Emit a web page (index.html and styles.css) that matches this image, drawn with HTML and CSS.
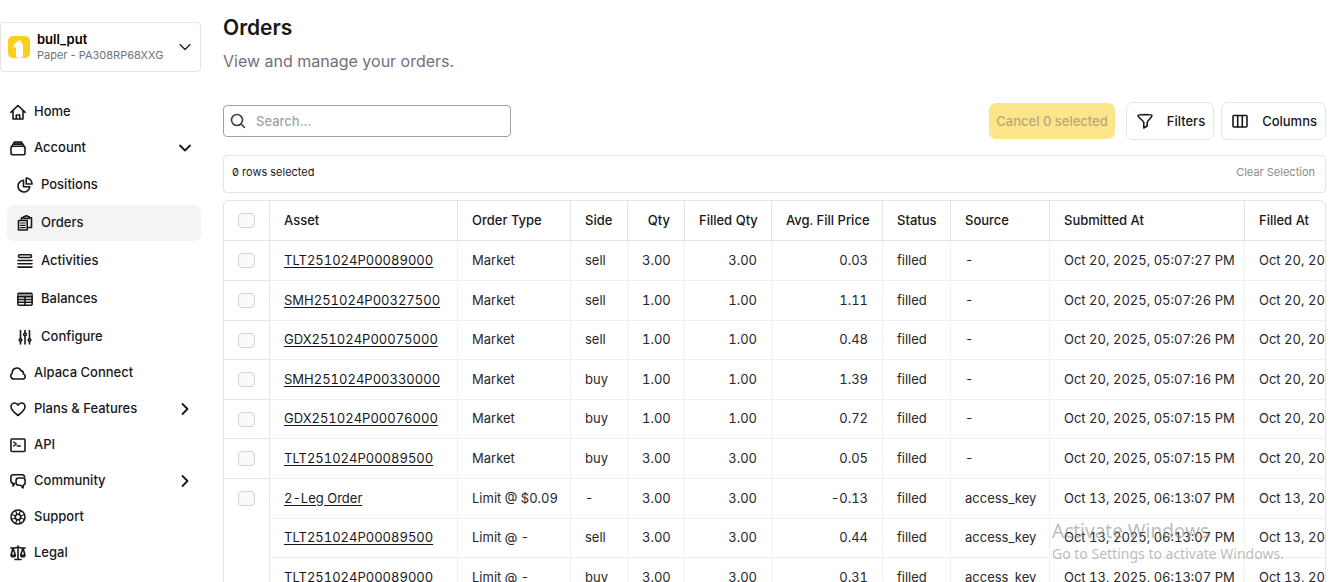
FILE: index.html
```html
<!DOCTYPE html>
<html lang="en">
<head>
<meta charset="utf-8">
<title>Orders</title>
<link rel="stylesheet" href="styles.css">
</head>
<body>
<div class="app">
  <aside class="sidebar">
    <button class="account" type="button">
      <svg class="logo" viewBox="0 0 22 22"><rect width="22" height="22" rx="5" fill="#fccf1b"/><path d="M8 20.500v-8.700L5.300 10.500 6 8.500l2.500-2L9.500 4.500l1.300.8L12.300 4l.4 2c1.600 1.200 2.300 2.600 2.300 5v9.500l-1.500 1.200h-4z" fill="#fff"/></svg>
      <span class="account-text"><strong>bull_put</strong><small>Paper - PA308RP68XXG</small></span>
      <svg class="icon thin" viewBox="0 0 16 16"><path d="M3 5.500l5 5 5-5"/></svg>
    </button>
    <nav class="nav">
      <a class="item" href="#"><svg class="icon" viewBox="0 0 16 16"><path d="M.8 8.300L8 1.500l7.200 6.800M3 6.800v8.200h10V6.800M6.300 15v-4h3.400v4"/></svg><span>Home</span></a>
      <a class="item" href="#"><svg class="icon" viewBox="0 0 16 16"><rect x="1" y="6.300" width="14" height="8.500" rx="1.800"/><path d="M1.500 6.800L3 4.300h10l1.500 2.500"/><path d="M3.300 4.300l1-2.300h7.400l1 2.300z" fill="#52525b"/></svg><span>Account</span><svg class="icon chevron" viewBox="0 0 16 16"><path d="M3 5.500l5 5 5-5"/></svg></a>
      <div class="subnav">
        <a class="item" href="#"><svg class="icon" viewBox="0 0 16 16"><path d="M6.500 3.200A5.900 5.900 0 1 0 12.800 9.800H6.500z"/><path d="M9.200 1v6h5.900A5.900 5.900 0 0 0 9.200 1z"/></svg><span>Positions</span></a>
        <a class="item active" href="#"><svg class="icon" viewBox="0 0 16 16"><path d="M1.500 5.500h8.700V15H1.500zM4.500 5V2.800h2M12 2.800h2.500V12.500h-4"/><path d="M6.500 3.500v-1.700h1.300C8.200.6 10.600.6 11 1.800h1.200v1.700z"/><path d="M3.500 8h4.700M3.500 10.300h4.700M3.500 12.600h4.700" stroke-width="1.200"/></svg><span>Orders</span></a>
        <a class="item" href="#"><svg class="icon" viewBox="0 0 16 16"><rect x="1.500" y="1.700" width="13" height="2.800" rx="1.200"/><path d="M1 7.500h14M1 10.800h14M1 14.100h14"/></svg><span>Activities</span></a>
        <a class="item" href="#"><svg class="icon" viewBox="0 0 16 16"><rect x=".9" y="2.300" width="14.200" height="12" rx="1"/><path d="M1 5.700h14M1 8.500h14M1 11.300h14M8 5.500V14"/><path d="M1 4h14" stroke="#71717a"/></svg><span>Balances</span></a>
        <a class="item" href="#"><svg class="icon" viewBox="0 0 16 16"><path d="M3.500 1.500v8M3.500 12.500V15M8 1.500V4M8 7v8M12.500 1.500v8M12.500 12.500V15"/><circle cx="3.500" cy="11" r="1.300"/><circle cx="8" cy="5.500" r="1.300"/><circle cx="12.500" cy="11" r="1.300"/></svg><span>Configure</span></a>
      </div>
      <a class="item" href="#"><svg class="icon" viewBox="0 0 16 16"><path d="M4 14a3.200 3.200 0 0 1-1.700-5.900A4.600 4.600 0 0 1 11 5.600a3.200 3.200 0 0 1 2.400 3.500A2.500 2.500 0 0 1 12.700 14z"/></svg><span>Alpaca Connect</span></a>
      <a class="item" href="#"><svg class="icon" viewBox="0 0 16 16"><path d="M8 14.500C4.500 11.800 1 9 1 5.700 1 3.400 2.700 2 4.600 2 6.200 2 7.400 3 8 4.200 8.600 3 9.800 2 11.400 2 13.300 2 15 3.400 15 5.700c0 3.300-3.500 6.100-7 8.800z"/></svg><span>Plans &amp; Features</span><svg class="icon chevron" viewBox="0 0 16 16"><path d="M5.500 3l5 5-5 5"/></svg></a>
      <a class="item" href="#"><svg class="icon" viewBox="0 0 16 16"><rect x="1" y="2" width="14" height="12.500" rx="1"/><path d="M3.800 5l2.400 2-2.400 2M7.300 9h3"/></svg><span>API</span></a>
      <a class="item" href="#"><svg class="icon" viewBox="0 0 16 16"><path d="M4.500 10.500L3 13v-2.700C1.500 10 .9 9 .9 7.500V4.200C.9 2.700 1.900 1.700 3.500 1.700H12c1.600 0 2.500 1 2.700 2.300"/><path d="M8.500 5h4.200c1.500 0 2.400 1 2.400 2.500v2.300c0 1.300-.8 2.200-2 2.400V15l-2.600-2.700h-2c-1.500 0-2.400-1-2.400-2.500v-2.300C6.100 6 7 5 8.500 5z"/></svg><span>Community</span><svg class="icon chevron" viewBox="0 0 16 16"><path d="M5.500 3l5 5-5 5"/></svg></a>
      <a class="item" href="#"><svg class="icon" viewBox="0 0 16 16"><circle cx="8" cy="8" r="7"/><circle cx="8" cy="8" r="2.700"/><path stroke-width="1.200" d="M5.200 7L1.500 5.500M7 5.200L5.500 1.500M9 5.200l1.500-3.700M10.800 7l3.700-1.500M10.800 9l3.700 1.500M9 10.800l1.500 3.700M7 10.800l-1.500 3.700M5.200 9l-3.700 1.500"/></svg><span>Support</span></a>
      <a class="item" href="#"><svg class="icon" viewBox="0 0 16 16"><path d="M8 1v13.500M5 14.500h6M.8 3h3.700L8 2.200l3.500.8h3.700M3 3L1 10.200h4.400zM13 3l-2.400 7.200H15zM1 10.500c.3 2 4.100 2 4.400 0M10.600 10.500c.3 2 4.100 2 4.400 0"/></svg><span>Legal</span></a>
    </nav>
  </aside>
  <main class="main">
    <h1>Orders</h1>
    <p class="lead">View and manage your orders.</p>
    <div class="toolbar">
      <label class="search"><svg class="icon" viewBox="0 0 16 16"><circle cx="7" cy="7" r="5.500"/><path d="M11 11l3.500 3.500"/></svg><input type="text" placeholder="Search..." aria-label="Search orders"></label>
      <div class="actions">
        <button class="cancel" type="button" disabled>Cancel 0 selected</button>
        <button class="outlined" type="button"><svg class="icon" viewBox="0 0 16 16"><path d="M1 2.500C1 1.200 15 1.200 15 2.500c0 2.300-4.800 5-4.800 7V13L6.800 15V9.500C6.800 7.500 1 4.800 1 2.500z"/></svg>Filters</button>
        <button class="outlined" type="button"><svg class="icon" viewBox="0 0 16 16"><rect x="1" y="2.500" width="14" height="11.500" rx="1"/><path d="M5.700 2.500V14M10.300 2.500V14"/></svg>Columns</button>
      </div>
    </div>
    <div class="selection"><span>0 rows selected</span><button type="button" disabled>Clear Selection</button></div>
    <div class="table-wrap">
      <table>
        <colgroup><col class="c-check"><col class="c-asset"><col class="c-type"><col class="c-side"><col class="c-side"><col class="c-fqty"><col class="c-price"><col class="c-status"><col class="c-source"><col class="c-date"><col class="c-date"></colgroup>
        <thead><tr><th class="check"><input type="checkbox" aria-label="Select all"></th><th>Asset</th><th>Order Type</th><th>Side</th><th class="num">Qty</th><th class="num">Filled Qty</th><th class="num">Avg. Fill Price</th><th>Status</th><th>Source</th><th>Submitted At</th><th>Filled At</th></tr></thead>
        <tbody>
          <tr><td class="check"><input type="checkbox" aria-label="Select order"></td><td><a href="#">TLT251024P00089000</a></td><td>Market</td><td>sell</td><td class="num">3.00</td><td class="num">3.00</td><td class="num">0.03</td><td>filled</td><td>-</td><td>Oct 20, 2025, 05:07:27 PM</td><td>Oct 20, 2025, 05:07:27 PM</td></tr>
          <tr><td class="check"><input type="checkbox" aria-label="Select order"></td><td><a href="#">SMH251024P00327500</a></td><td>Market</td><td>sell</td><td class="num">1.00</td><td class="num">1.00</td><td class="num">1.11</td><td>filled</td><td>-</td><td>Oct 20, 2025, 05:07:26 PM</td><td>Oct 20, 2025, 05:07:26 PM</td></tr>
          <tr><td class="check"><input type="checkbox" aria-label="Select order"></td><td><a href="#">GDX251024P00075000</a></td><td>Market</td><td>sell</td><td class="num">1.00</td><td class="num">1.00</td><td class="num">0.48</td><td>filled</td><td>-</td><td>Oct 20, 2025, 05:07:26 PM</td><td>Oct 20, 2025, 05:07:26 PM</td></tr>
          <tr><td class="check"><input type="checkbox" aria-label="Select order"></td><td><a href="#">SMH251024P00330000</a></td><td>Market</td><td>buy</td><td class="num">1.00</td><td class="num">1.00</td><td class="num">1.39</td><td>filled</td><td>-</td><td>Oct 20, 2025, 05:07:16 PM</td><td>Oct 20, 2025, 05:07:16 PM</td></tr>
          <tr><td class="check"><input type="checkbox" aria-label="Select order"></td><td><a href="#">GDX251024P00076000</a></td><td>Market</td><td>buy</td><td class="num">1.00</td><td class="num">1.00</td><td class="num">0.72</td><td>filled</td><td>-</td><td>Oct 20, 2025, 05:07:15 PM</td><td>Oct 20, 2025, 05:07:15 PM</td></tr>
          <tr><td class="check"><input type="checkbox" aria-label="Select order"></td><td><a href="#">TLT251024P00089500</a></td><td>Market</td><td>buy</td><td class="num">3.00</td><td class="num">3.00</td><td class="num">0.05</td><td>filled</td><td>-</td><td>Oct 20, 2025, 05:07:15 PM</td><td>Oct 20, 2025, 05:07:15 PM</td></tr>
          <tr><td class="check" rowspan="3"><input type="checkbox" aria-label="Select order"></td><td><a href="#">2-Leg Order</a></td><td>Limit @ $0.09</td><td>-</td><td class="num">3.00</td><td class="num">3.00</td><td class="num">-0.13</td><td>filled</td><td>access_key</td><td>Oct 13, 2025, 06:13:07 PM</td><td>Oct 13, 2025, 06:13:07 PM</td></tr>
          <tr><td><a href="#">TLT251024P00089500</a></td><td>Limit @ -</td><td>sell</td><td class="num">3.00</td><td class="num">3.00</td><td class="num">0.44</td><td>filled</td><td>access_key</td><td>Oct 13, 2025, 06:13:07 PM</td><td>Oct 13, 2025, 06:13:07 PM</td></tr>
          <tr><td><a href="#">TLT251024P00089000</a></td><td>Limit @ -</td><td>buy</td><td class="num">3.00</td><td class="num">3.00</td><td class="num">0.31</td><td>filled</td><td>access_key</td><td>Oct 13, 2025, 06:13:07 PM</td><td>Oct 13, 2025, 06:13:07 PM</td></tr>
        </tbody>
      </table>
    </div>
  </main>
</div>
<div class="watermark"><div class="wm-title">Activate Windows</div><div class="wm-text">Go to Settings to activate Windows.</div></div>
</body>
</html>
```
FILE: styles.css
```css
* { box-sizing: border-box; }
body { margin: 0; height: 100vh; overflow: hidden; background: #fff; color: #18181b; font: 13px/20px Inter, "Liberation Sans", sans-serif; }
button, input { font: inherit; color: inherit; }
a { color: inherit; }
.app { display: flex; gap: 22px; height: 100%; padding-right: 14px; }
.icon { width: 16px; height: 16px; flex: none; fill: none; stroke: #18181b; stroke-width: 1.6; stroke-linejoin: round; stroke-linecap: round; }
.thin { stroke-width: 1.2; }

.sidebar { width: 201px; flex: none; padding-top: 22px; }
.account { display: flex; align-items: center; width: 100%; height: 50px; padding: 0 7px; gap: 7px; border: 1px solid #e4e4e7; border-radius: 4px; background: #fff; text-align: left; }
.logo { width: 22px; height: 22px; flex: none; }
.account-text { display: flex; flex-direction: column; flex: 1; padding-bottom: 1px; white-space: nowrap; }
.account-text strong { font-weight: 600; line-height: 16px; color: #000; }
.account-text small { font-size: 11px; line-height: 16px; color: #71717a; }
.nav { display: flex; flex-direction: column; margin-top: 22px; }
.item { display: flex; align-items: center; gap: 8px; height: 36px; padding: 0 8px 0 10px; border-radius: 7px; font-weight: 500; text-decoration: none; }
.item span { padding-bottom: 2px; }
.chevron { margin-left: auto; stroke-width: 1.8; }
.subnav { display: flex; flex-direction: column; gap: 2px; padding: 1px 0 0 7px; }
.active { background: #f4f4f4; }

.main { flex: 1; min-width: 0; padding-top: 14px; }
h1 { margin: 0; font-size: 21px; line-height: 28px; font-weight: 600; }
.lead { margin: 8px 0 30px; font-size: 16px; line-height: 22px; color: #71717a; }
.toolbar { display: flex; align-items: center; justify-content: space-between; height: 38px; }
.search { display: flex; align-items: center; gap: 10px; width: 288px; height: 32px; padding: 0 6px; border: 1px solid #a1a1aa; border-radius: 4px; }
.search .icon { stroke: #3f3f46; }
.search input { flex: 1; min-width: 0; padding: 0; border: 0; outline: 0; background: none; font-weight: 500; }
.search input::placeholder { color: #a1a1aa; opacity: 1; }
.actions { display: flex; align-items: center; gap: 7px; }
.actions button { font-weight: 500; white-space: nowrap; }
.cancel { height: 36px; margin-right: 4px; padding: 0 7px; border: 0; border-radius: 7px; background: #fde68a; color: #b9a67c; }
.outlined { display: flex; align-items: center; gap: 14px; height: 38px; padding: 0 8px 0 10px; border: 1px solid #e4e4e7; border-radius: 7px; background: #fff; }
.selection { display: flex; align-items: flex-start; justify-content: space-between; height: 38px; margin: 15px 0 7px; padding: 8px 10px 0 8px; border: 1px solid #e4e4e4; border-radius: 4px; font-size: 11px; line-height: 16px; }
.selection span { font-feature-settings: "zero"; }
.selection button { padding: 0; border: 0; background: none; color: #8c8c8c; }

.table-wrap { overflow: hidden; border: 1px solid #e4e4e4; border-radius: 6px; }
table { width: 1216px; table-layout: fixed; border-collapse: separate; border-spacing: 0; font-variant-numeric: tabular-nums; }
.c-check { width: 46px; }
.c-asset { width: 188px; }
.c-type { width: 113px; }
.c-side { width: 57px; }
.c-fqty { width: 87px; }
.c-price { width: 111px; }
.c-status { width: 68px; }
.c-source { width: 99px; }
.c-date { width: 195px; }
th, td { height: 40px; padding: 0 14px 2px; border: solid #f0f0f0; border-width: 0 1px 1px 0; text-align: left; white-space: nowrap; line-height: 20px; }
th { font-weight: 500; border-color: #e4e4e4; }
td { color: #27272a; }
tbody tr:nth-child(5n) td, tbody tr:nth-child(5n+3) td { height: 39px; }
th.num, td.num { text-align: right; }
th.check, td.check { border-color: #e4e4e4; vertical-align: top; padding-top: 12px; }
input[type="checkbox"] { appearance: none; display: block; width: 17px; height: 15px; margin: 0; border: 1px solid #d4d4d8; border-radius: 4px; background: #fafafa; }
td a { color: #18181b; text-underline-offset: 2px; }

.watermark { position: absolute; left: 1052px; top: 519px; color: rgba(130, 130, 130, .55); font-family: "Noto Sans", sans-serif; white-space: nowrap; pointer-events: none; }
.wm-title { font-size: 19px; line-height: 24px; }
.wm-text { font-size: 14px; line-height: 21px; }
```
